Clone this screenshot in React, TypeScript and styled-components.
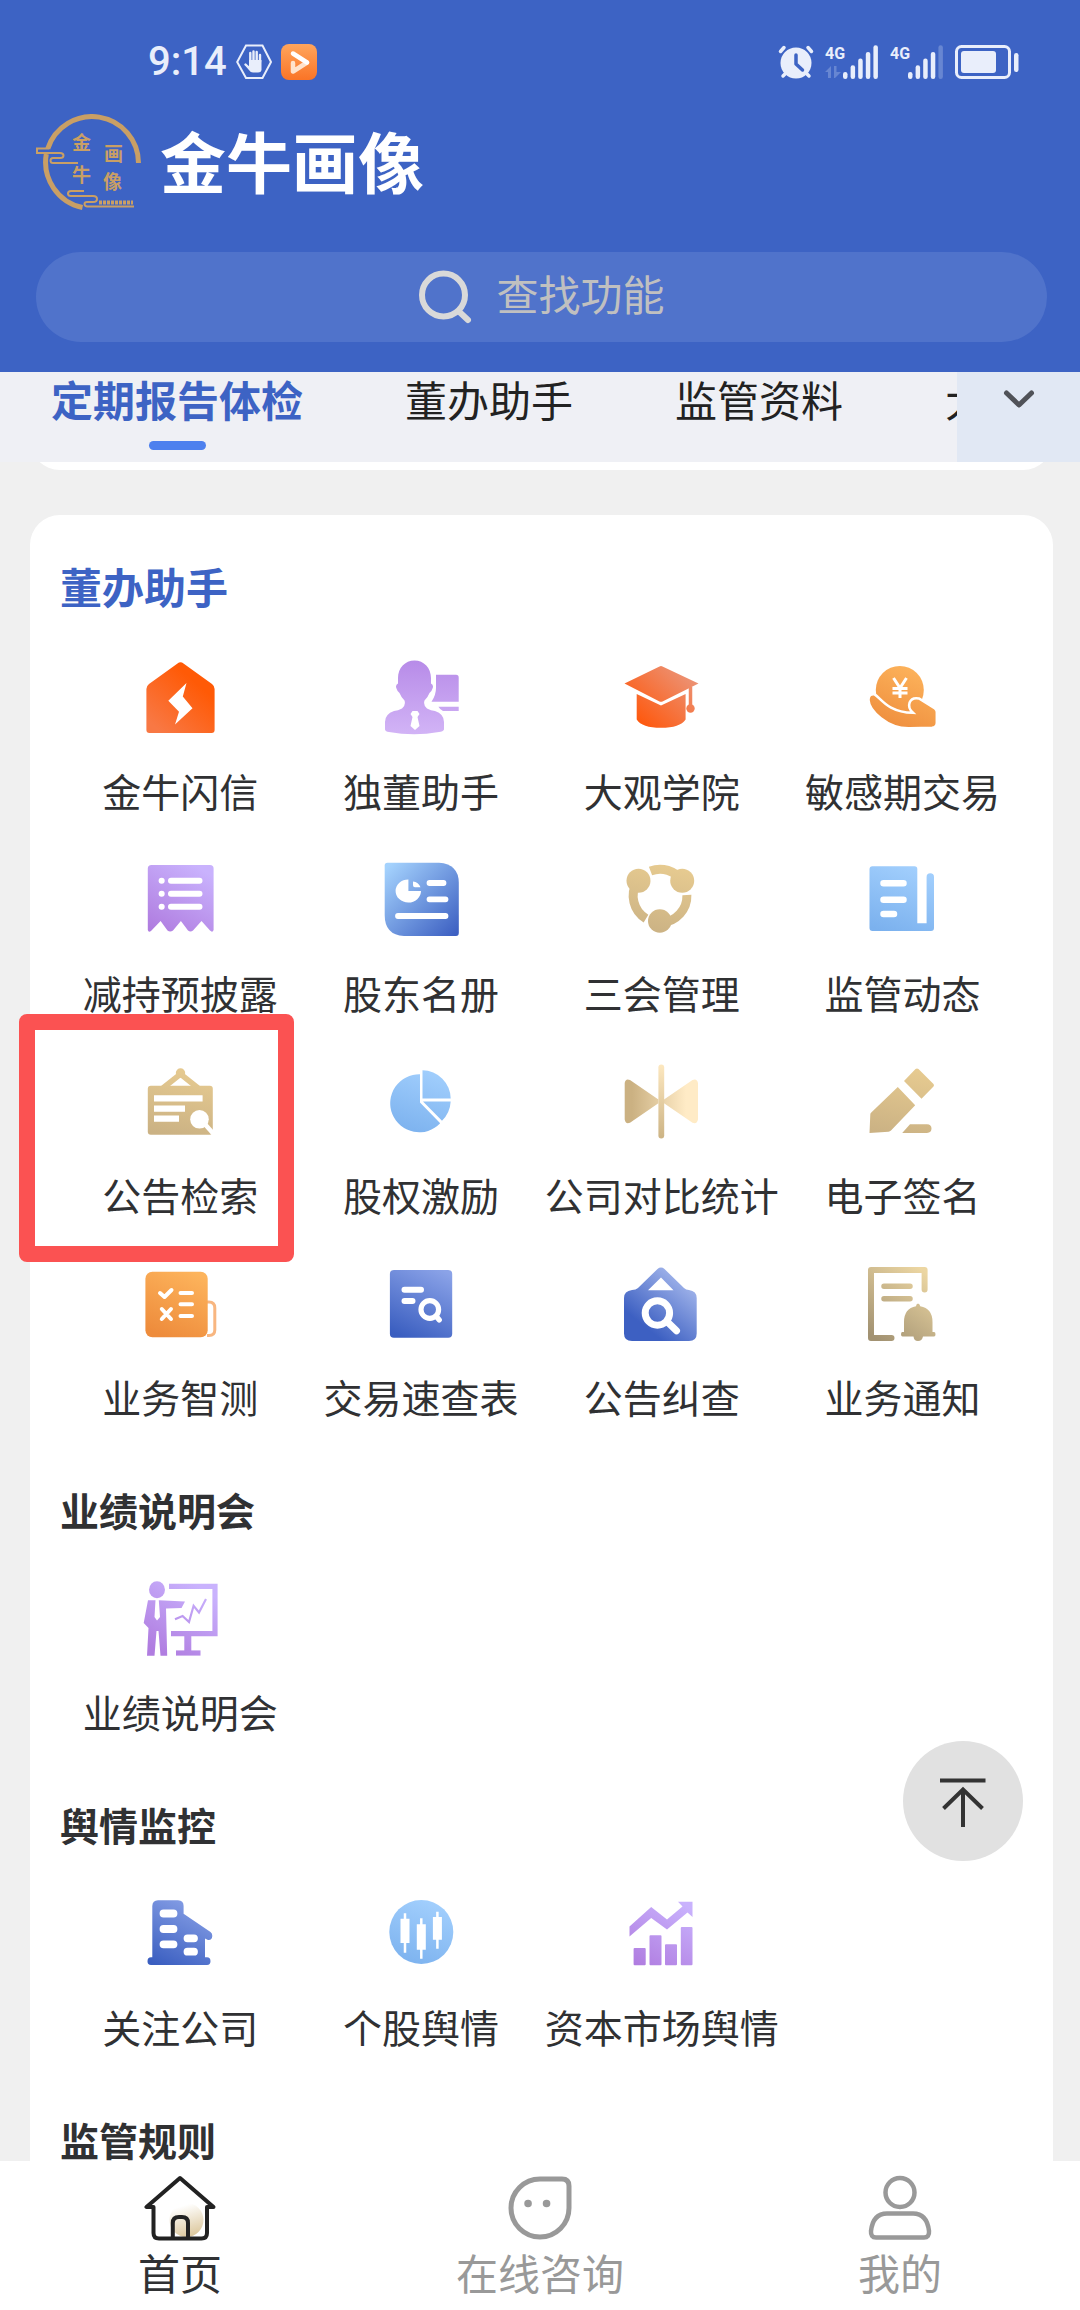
import React from 'react';
import styled, { createGlobalStyle, css } from 'styled-components';

const colors = {
  brand: '#3d63c4',
  page: '#f0f0f0',
  text: '#303133',
  muted: '#999999',
  status: '#e9eefb',
  gold: '#c99f65',
};

const GlobalStyle = createGlobalStyle`
  *, *::before, *::after { box-sizing: border-box; }
  body {
    margin: 0;
    background: ${colors.page};
    color: ${colors.text};
    font-family: "Noto Sans CJK SC", "Noto Sans", sans-serif;
  }
  button, input { font: inherit; color: inherit; border: 0; padding: 0; background: none; }
  a { color: inherit; text-decoration: none; }
  h1, h2 { margin: 0; }
  svg { display: block; flex: none; }
`;

const Screen = styled.div`
  position: relative;
  display: flex;
  flex-direction: column;
  height: 100vh;
  overflow: hidden;
`;

/* ---------- header ---------- */

const Header = styled.header`
  flex: none;
  padding: 36px 33px 30px 36px;
  background: ${colors.brand};
`;

const StatusBar = styled.div`
  display: flex;
  align-items: center;
  justify-content: space-between;
  height: 52px;
  padding: 0 28px 0 112px;
  color: ${colors.status};
`;

const StatusGroup = styled.div<{ $gap: number }>`
  display: flex;
  align-items: center;
  gap: ${(p) => p.$gap}px;
`;

const Clock = styled.span`
  font: 500 40px/52px Roboto, sans-serif;
`;

const Brand = styled.div`
  display: flex;
  align-items: flex-start;
  gap: 18px;
  height: 96px;
  margin-top: 26px;
`;

const BrandName = styled.h1`
  color: #fff;
  font-size: 66px;
  font-weight: 700;
  line-height: 90px;
  white-space: nowrap;
`;

const SearchBox = styled.label`
  display: flex;
  align-items: center;
  justify-content: center;
  gap: 25px;
  height: 90px;
  margin-top: 42px;
  border-radius: 45px;
  background: #5073cb;
`;

const SearchInput = styled.input`
  width: 168px;
  height: 62px;
  margin-bottom: 8px;
  font-size: 42px;
  line-height: 62px;
  outline: none;
  &::placeholder { color: #c0c0c0; opacity: 1; }
`;

/* ---------- tabs ---------- */

const TabBar = styled.nav`
  display: flex;
  flex: none;
  height: 90px;
  background: #eff0f5;
`;

const TabList = styled.div`
  display: flex;
  flex: 1;
  min-width: 0;
  overflow-x: clip;
`;

const Tab = styled.button<{ $active?: boolean }>`
  display: flex;
  flex: none;
  flex-direction: column;
  align-items: center;
  justify-content: space-between;
  padding: 0 51px 12px;
  font-size: 42px;
  line-height: 54px;
  white-space: nowrap;
  color: #222;
  ${(p) => p.$active && css`
    color: ${colors.brand};
    font-weight: 700;
    &::after {
      content: '';
      width: 57px;
      height: 9px;
      border-radius: 5px;
      background: #4d80ee;
    }
  `}
`;

const MoreTabs = styled.button`
  display: flex;
  flex: none;
  justify-content: center;
  width: 123px;
  padding-top: 17px;
  background: #e1e8f4;
`;

/* ---------- content ---------- */

const Main = styled.main`
  flex: 1;
  min-height: 0;
  padding: 0 27px 0 30px;
  overflow-y: auto;
  scrollbar-width: none;
`;

const Card = styled.div`
  padding: 40px 30px;
  border-radius: 30px;
  background: #fff;
`;

const PassedCard = styled(Card)`
  margin: -72px 0 45px;
`;

const Section = styled.section`
  & + & { margin-top: 55px; }
`;

const SectionTitle = styled.h2<{ $lead?: boolean }>`
  margin-bottom: 43px;
  font-size: ${(p) => (p.$lead ? 42 : 39)}px;
  line-height: ${(p) => (p.$lead ? 62 : 58)}px;
  font-weight: 700;
  color: ${(p) => (p.$lead ? colors.brand : colors.text)};
`;

const Grid = styled.div`
  display: grid;
  grid-template-columns: repeat(4, minmax(0, 1fr));
  row-gap: 43px;
`;

const Entry = styled.a<{ $marked?: boolean }>`
  position: relative;
  display: flex;
  flex-direction: column;
  align-items: center;
  gap: 26px;
  font-size: 39px;
  line-height: 58px;
  white-space: nowrap;
  ${(p) => p.$marked && css`
    &::after {
      content: '';
      position: absolute;
      inset: -50px 7px -39px -41px;
      border: 16px solid #fb5252;
      border-radius: 8px;
      pointer-events: none;
    }
  `}
`;

const TopButton = styled.button`
  position: absolute;
  right: 57px;
  bottom: 449px;
  display: flex;
  align-items: center;
  justify-content: center;
  width: 120px;
  height: 120px;
  border-radius: 50%;
  background: #e1e1e1;
`;

/* ---------- bottom navigation ---------- */

const BottomNav = styled.nav`
  display: grid;
  flex: none;
  grid-template-columns: repeat(3, 1fr);
  padding: 14px 0 8px;
  background: #fff;
`;

const NavItem = styled.a<{ $active?: boolean }>`
  display: flex;
  flex-direction: column;
  align-items: center;
  gap: 1px;
  font-size: 42px;
  line-height: 60px;
  color: ${(p) => (p.$active ? colors.text : colors.muted)};
`;

/* ---------- icons ---------- */

type Ramp = [from: string, to: string, x1: number, y1: number, x2: number, y2: number];

const ramps: Record<string, Ramp> = {
  flame: ['#f87844', '#ff5a06', 10, 65, 50, 20],
  cap: ['#ff5508', '#ec9274', 12, 65, 62, 12],
  lilac: ['#b78be8', '#d2b4f6', 0, 0, 0, 75],
  violet: ['#b07de0', '#c9b2fd', 15, 70, 55, 5],
  amber: ['#ee8c3c', '#fdb45c', 20, 70, 50, 5],
  azureNavy: ['#a4d2fd', '#3d60c2', 4, 4, 72, 72],
  sand: ['#e6ca90', '#cbb284', 45, 5, 30, 72],
  azure: ['#a2cffd', '#7bb1ee', 50, 5, 25, 72],
  navy: ['#3a5ec0', '#8ba3e8', 20, 72, 55, 2],
  navyPale: ['#3d60c2', '#a9bbee', 20, 60, 62, 8],
  cream: ['#cbb182', '#ffebc6', 8, 37, 62, 37],
  creamBar: ['#fde8c0', '#ccb384', 0, 0, 0, 75],
  khaki: ['#a29272', '#ecd6a2', 10, 72, 60, 6],
};

const Glyph = ({ ramp, children }: { ramp: string; children: (paint: string) => React.ReactNode }) => {
  const [from, to, x1, y1, x2, y2] = ramps[ramp];
  const id = React.useId();
  return (
    <svg width="75" height="75" viewBox="0 0 75 75" fill="none" aria-hidden="true">
      <linearGradient id={id} gradientUnits="userSpaceOnUse" x1={x1} y1={y1} x2={x2} y2={y2}>
        <stop stopColor={from} />
        <stop offset="1" stopColor={to} />
      </linearGradient>
      {children(`url(#${id})`)}
    </svg>
  );
};

const FlashIcon = () => (
  <Glyph ramp="flame">{(p) => <>
    <path fill={p} d="M34.5 3.6Q37.5 1 40.5 3.6L69 24Q71.6 26 71.6 29V70Q71.6 73 68.6 73H6.4Q3.4 73 3.4 70V29Q3.4 26 6 24Z" />
    <path fill="#fff" d="M43.5 23L39.8 36.5L49.5 48.2L32 64.5L36 51.7L25.3 40.8Z" />
  </>}</Glyph>
);

const DirectorIcon = () => (
  <Glyph ramp="lilac">{(p) => <>
    <path fill={p} d="M30.500 0.500C40 0.500 47 8 47 18V23.500Q50 25 48.500 28.500Q47.500 32 45.500 33Q44 37 40.500 40.500Q39 45 43 48.500Q47 50.500 51 51Q60 54 60 62V69.500Q59 71.500 55 72Q30 76.500 5 72Q1.500 71.500 1 69.500V62Q1 54 10 51Q14 50.500 18 48.500Q22 45 20.500 40.500Q17 37 15.500 33Q13.500 32 12.500 28.500Q11 25 14 23.500V18C14 8 21 0.500 30.500 0.500Z" />
    <path fill={p} d="M52 14.800H72Q74.700 14.800 74.700 17.500V41.700H47.500Q52 35 52 28ZM54.400 46.700H74.700V51H59Q56 49.500 54.400 46.700Z" />
    <path fill="#fff" d="M28.500 51H33.500L35.500 54L33.500 57L35.500 66L31 70L26.500 66L28.500 57L26.500 54Z" />
  </>}</Glyph>
);

const AcademyIcon = () => (
  <Glyph ramp="cap">{(p) => <>
    <path fill={p} d="M0.500 23.500L35.500 6.500Q37 5.700 38.500 6.500L74.500 23.500L38.500 41.500Q37 42.200 35.500 41.500Z" />
    <path fill={p} d="M12.700 34L37 45.500L61.600 34V59.500Q56 67.800 37 67.800T12.700 59.500Z" />
    <path stroke={p} strokeWidth="3.500" d="M66.500 27V46" />
    <circle fill={p} cx="66.500" cy="48.500" r="4.200" />
  </>}</Glyph>
);

const TradeIcon = () => (
  <Glyph ramp="amber">{(p) => <>
    <circle fill={p} cx="34.800" cy="30" r="24" />
    <path fill={p} stroke="#fff" strokeWidth="2.500" d="M3.500 40Q3.500 33.500 9.500 34.300C16 38 22 52 48 52.800C41 46.500 44 36.500 54 38.500L70 48.500Q71.800 50 71.800 52V63Q71.500 67.500 67 67.800L45 68.200C22 69 4 50 3.500 40Z" />
    <path stroke="#fff" strokeWidth="3" d="M28.500 18L35 28L41.500 18M35 27V38M27.500 28.500H42.500M27.500 33H42.500" />
  </>}</Glyph>
);

const ReceiptIcon = () => (
  <Glyph ramp="violet">{(p) => <>
    <path fill={p} d="M8.500 3H67Q70.600 3 70.600 6.500V68Q69.500 71 67 68.500L58.500 59L50 68.500Q47.500 70.500 45 68.500L37.900 59L30 68.500Q27.200 70.500 24.500 68.500L17.600 59L8 69Q5.500 71 4.800 68V6.500Q4.800 3 8.500 3Z" />
    <path stroke="#fff" strokeWidth="6" strokeLinecap="round" d="M28 18.700H56.500M28 31.700H56.500M28 44.700H56.500M18.600 18.700H18.700M18.600 31.700H18.700M18.600 44.700H18.700" />
  </>}</Glyph>
);

const RosterIcon = () => (
  <Glyph ramp="azureNavy">{(p) => <>
    <path fill={p} d="M3.500 0.700H55Q74.800 2 74.800 21V71Q74.800 74 72 74H20Q0.700 73 0.700 53V3.500Q0.700 0.700 3.500 0.700Z" />
    <path fill="#fff" d="M24.400 17.500V29H37A12.700 11.500 0 1 1 24.400 17.500ZM29 19.500Q34.500 20 36.500 25.200H31Q29 25.200 29 23.200Z" />
    <path stroke="#fff" strokeWidth="5.800" strokeLinecap="round" d="M45.500 21H59.500M45.500 37.300H61.500M14 54H61.500" />
  </>}</Glyph>
);

const MeetingIcon = () => (
  <Glyph ramp="sand">{(p) => <>
    <path stroke={p} strokeWidth="9" d="M26.500 9A26.700 26.700 0 0 1 58 18.700M62.900 33A26.700 26.700 0 0 1 38 60.500M22 56.600A26.700 26.700 0 0 1 13 20" />
    <circle fill={p} cx="14.500" cy="18.700" r="12" />
    <circle fill={p} cx="58.200" cy="18.700" r="12" />
    <circle fill={p} cx="35.800" cy="59" r="11.800" />
  </>}</Glyph>
);

const NewsIcon = () => (
  <Glyph ramp="azure">{(p) => <>
    <path fill={p} d="M7.500 4.300H49.500Q52.300 4.300 52.300 7V61.300H61.600V15Q61.600 11.300 65.300 11.300T69 15V66Q69 69 66 69H7.500Q4.500 69 4.500 66V7.200Q4.500 4.300 7.500 4.300Z" />
    <path stroke="#fff" strokeWidth="6.500" strokeLinecap="round" d="M18.500 21.300H38.500M18.500 37.700H38.500M18.500 52H29" />
  </>}</Glyph>
);

const NoticeSearchIcon = () => (
  <Glyph ramp="sand">{(p) => <>
    <path stroke={p} strokeWidth="5.500" d="M20 24L37.500 10L55 24" />
    <circle fill={p} cx="37.500" cy="9" r="4.700" />
    <rect fill={p} x="4.800" y="21.700" width="65" height="49" rx="3" />
    <path fill="#fff" d="M11 31.300H59.600V37.500H11ZM11 41.500H42V47.700H11ZM11 51.500H36V57.700H11Z" />
    <circle fill="#fff" cx="56.500" cy="55.300" r="9.300" />
    <path stroke="#fff" strokeWidth="4.500" d="M60 58L72 71.500" />
  </>}</Glyph>
);

const PieIcon = () => (
  <Glyph ramp="azure">{(p) => (
    <path fill={p} d="M36 10.300V38.500L56.200 59.300A29 29 0 1 1 36 10.300ZM38.500 6.300A28.500 28.500 0 0 1 66.700 34.500H38.500ZM39 37.500H66.700Q66 49 58 56.700Z" />
  )}</Glyph>
);

const CompareIcon = () => (
  <Glyph ramp="cream">{(p) => <>
    <path fill={p} d="M0.700 19Q1.500 14 6 16L34.400 35.500V39.200L6 58.700Q1.500 60.500 0.700 55.500ZM74 19Q73 14 68.500 16L40 35.500V39.200L68.500 58.700Q73 60.500 74 55.500Z" />
    <linearGradient id="compare-bar" gradientUnits="userSpaceOnUse" x1="0" y1="0" x2="0" y2="75">
      <stop stopColor={ramps.creamBar[0]} />
      <stop offset="1" stopColor={ramps.creamBar[1]} />
    </linearGradient>
    <rect fill="url(#compare-bar)" x="34.400" y="0.500" width="5.800" height="74" rx="2.900" />
  </>}</Glyph>
);

const SignIcon = () => (
  <Glyph ramp="sand">{(p) => (
    <path fill={p} d="M50.500 5Q52 3.800 53.500 5L68.500 20Q69.500 21.300 68.500 22.600L56.500 34.700L39 17ZM32.800 23L50.200 41.200L26 66.500Q25 67.600 23.500 67.700L4.500 69L5.300 50.500Q5.300 49.500 6 48.700ZM45 60.300H62Q66.500 60.500 66.500 64.600T62 69H37.200Z" />
  )}</Glyph>
);

const QuizIcon = () => (
  <Glyph ramp="amber">{(p) => <>
    <path stroke="#f8b680" strokeWidth="3" d="M64 36H66Q71.800 36 71.800 42V64Q71.800 69.500 66 69.500H64" />
    <rect fill={p} x="2.400" y="5.700" width="62.300" height="65.600" rx="7" />
    <path stroke="#fff" strokeWidth="4" strokeLinecap="round" strokeLinejoin="round" d="M17 27L21.500 31L28.500 24M18.800 43L28 53M28 43L18.800 53M37.500 27H49M37.500 38.300H49M37.500 50H49" />
  </>}</Glyph>
);

const TableSearchIcon = () => (
  <Glyph ramp="navy">{(p) => <>
    <rect fill={p} x="5.900" y="4" width="62.300" height="67.700" rx="4" />
    <path stroke="#fff" strokeWidth="6" strokeLinecap="round" d="M20.500 23.700H37M20.500 35H28.500" />
    <circle stroke="#fff" strokeWidth="5.200" cx="45.800" cy="43.500" r="8.800" />
    <path stroke="#fff" strokeWidth="5.200" strokeLinecap="round" d="M52 50L55.300 54" />
  </>}</Glyph>
);

const ReviewIcon = () => (
  <Glyph ramp="navyPale">{(p) => <>
    <path fill={p} fillRule="evenodd" d="M33.500 3Q37 0.200 40.500 3L60 22Q62 24 65 24Q72.700 25 72.700 32V67.500Q72.700 75 65 75H8Q0 75 0 67.500V32Q0 25 8 24Q12 24 14 22ZM37 11.500L24 24.300H49.500Z" />
    <circle stroke="#fff" strokeWidth="7" cx="33.400" cy="47" r="12.200" />
    <path stroke="#fff" strokeWidth="7" strokeLinecap="round" d="M43.500 56L52.500 64.800" />
  </>}</Glyph>
);

const NotifyIcon = () => (
  <Glyph ramp="khaki">{(p) => <>
    <path stroke={p} strokeWidth="6" strokeLinecap="round" strokeLinejoin="round" d="M59.600 23.500V4H6V72H26.500" />
    <path stroke={p} strokeWidth="5.500" strokeLinecap="round" d="M19 20.300H45M19 32.700H45" />
    <path fill={p} d="M53 37.500Q55 38 55.200 40.300Q67.500 42.500 67.500 56V66H69Q70.500 66 70.500 68.200T69 70.500H58Q57 75 53 75T48.500 70.500H37.500Q36 70.500 36 68.200T37.500 66H39V56Q39 42.500 51 40.300Q51 38 53 37.500Z" />
  </>}</Glyph>
);

const BriefingIcon = () => (
  <Glyph ramp="violet">{(p) => <>
    <ellipse fill={p} cx="14" cy="8.700" rx="8" ry="8.500" />
    <path fill={p} d="M5 19.300H12.500L11.500 36L14 39.500L17 36L15.800 19.300L42 20.500L38.500 27L23 27.500L24.200 74.700H17.500L15.500 50H13.500L11.500 74.700H4L5.500 47L0.700 42Z" />
    <path stroke={p} strokeWidth="5.200" d="M26 5.300H72V52.700H28" />
    <path stroke={p} strokeWidth="7" d="M44.800 53V71" />
    <path stroke={p} strokeWidth="5.200" d="M33 72H57.500" />
    <path stroke={p} strokeWidth="2.200" d="M32 38.300L39.600 35L46 41L50.600 24.800L56 31.500L63 18" />
  </>}</Glyph>
);

const CompanyIcon = () => (
  <Glyph ramp="navy">{(p) => <>
    <path fill={p} d="M15 4.300H35Q40.600 4.500 40.600 10V17.700L67.500 36Q69.500 37.500 69.300 40Q69 44.500 65 44L62 42.500V61.300H64Q67.500 61.500 67.500 65.200T64 69H8Q4.500 69 4.500 65.200T8 61.300H9.300V10Q9.500 4.500 15 4.300Z" />
    <path stroke="#fff" strokeWidth="7.800" strokeLinecap="round" d="M20.500 17.500H30.500M20.500 33H30.500M20.500 48.300H30.500M44.500 42.300H51M44.500 55.700H51" />
  </>}</Glyph>
);

const CandleIcon = () => (
  <Glyph ramp="azure">{(p) => <>
    <circle fill={p} cx="37.300" cy="36" r="32" />
    <path stroke="#fff" strokeWidth="9" d="M21 22.700V47M37.300 28.300V53.700M53.400 21V43.700" />
    <path stroke="#fff" strokeWidth="2.500" d="M21 17.300V56.700M37.300 22.300V62.700M53.400 15.700V52.700" />
  </>}</Glyph>
);

const MarketIcon = () => (
  <Glyph ramp="violet">{(p) => <>
    <path fill={p} d="M5.500 30.500L27.200 11L43 23.500L58.500 10.500L54 5.800H68.500V21L63.500 16.500L43 33.500L27.200 22L5.500 40.500Z" />
    <path fill={p} stroke={p} strokeWidth="2" strokeLinejoin="round" d="M10.600 53H20.700V68.300H10.600ZM26.500 40.300H36.500V68.300H26.500ZM42 49.200H52V68.300H42ZM57.800 32H67.500V68.300H57.800Z" />
  </>}</Glyph>
);

const LogoMark = () => (
  <svg width="106" height="96" viewBox="0 0 106 96" fill="none" stroke={colors.gold} aria-hidden="true">
    <path strokeWidth="5" d="M102.500 49A46.500 46.500 0 0 0 11.800 34.600M10.300 40A46.500 46.500 0 0 0 46.500 93.500" />
    <path strokeWidth="2" d="M13 34.500H1V39H24Q27.500 39 27.500 41.500T24 44H17Q14.500 44 14.500 46.500T17 49H42" />
    <path strokeWidth="2" d="M48 77H35Q32 77 32 79.500T35 82H57Q61 82 61 85T57 88H51Q48.500 88 48.500 90T51 92.500H98" />
    <path strokeWidth="4" strokeDasharray="3 1" d="M63 88.500H97" />
    <g fill={colors.gold} stroke="none" fontSize="19" fontWeight="700">
      <text x="36" y="36">金</text>
      <text x="36" y="68">牛</text>
      <text x="68" y="47">画</text>
      <text x="67" y="75">像</text>
    </g>
  </svg>
);

const HandIcon = () => (
  <svg width="36" height="36" viewBox="0 0 36 36" fill="none" stroke="currentColor" aria-hidden="true">
    <path strokeWidth="2" d="M10 1.500H26.500L35 18L26.500 34H10L1.200 18Z" />
    <path strokeWidth="2.400" strokeLinecap="round" d="M14.300 18V9M17.500 17V7.500M20.700 17V8M24 18V11M9.500 20.500L14 25" />
    <path fill="currentColor" stroke="none" d="M13 16H25.500V26Q25 28.500 22 28.500H17Q14.500 28.500 13 26L9 21L13 22Z" />
  </svg>
);

const PlayerIcon = () => (
  <svg width="36" height="36" viewBox="0 0 36 36" fill="none" aria-hidden="true">
    <linearGradient id="player" x1="0" y1="0" x2="0" y2="1">
      <stop stopColor="#ffa55c" />
      <stop offset="1" stopColor="#fa7426" />
    </linearGradient>
    <rect width="36" height="36" rx="8" fill="url(#player)" />
    <path stroke="#ffe3cc" strokeWidth="4.500" strokeLinecap="round" strokeLinejoin="round" d="M26 18.500L12 27.500V19" />
    <path stroke="#fff" strokeWidth="4.500" strokeLinecap="round" strokeLinejoin="round" d="M12 9.500L26 18.500" />
  </svg>
);

const AlarmIcon = () => (
  <svg width="36" height="34" viewBox="0 0 36 34" fill="none" stroke="currentColor" strokeLinecap="round" aria-hidden="true">
    <circle cx="18" cy="18" r="15.500" fill="currentColor" stroke="none" />
    <path strokeWidth="3.500" d="M2.500 6.500L6 2.500M33.500 6.500L30 2.500M5 31L8 28M31 31L28 28" />
    <path stroke={colors.brand} strokeWidth="3.500" strokeLinejoin="round" d="M18 10V19L24.500 25" />
  </svg>
);

const SignalIcon = ({ bars, transfer }: { bars: number; transfer?: boolean }) => (
  <svg width="54" height="34" viewBox="0 0 54 34" fill="currentColor" aria-hidden="true">
    <text x="0" y="14" fontFamily="Roboto, sans-serif" fontSize="16" fontWeight="700">4G</text>
    {transfer && <path opacity="0.250" d="M0 27L6 21V33H3V27ZM9 21H11.500V27H16L10 33H9Z" />}
    {[0, 1, 2, 3, 4].map((i) => (
      <rect key={i} x={18 + i * 7.600} y={27 - i * 6.700} width="4.500" height={7 + i * 6.700} rx="2.200" opacity={i < bars ? 1 : 0.250} />
    ))}
  </svg>
);

const BatteryIcon = () => (
  <svg width="64" height="34" viewBox="0 0 64 34" fill="currentColor" aria-hidden="true">
    <rect x="1.500" y="1.500" width="53" height="31" rx="5" fill="none" stroke="currentColor" strokeWidth="3" />
    <rect x="6" y="6" width="35" height="22" rx="3" />
    <rect x="59" y="8" width="4.500" height="19" rx="2.200" />
  </svg>
);

const SearchIcon = () => (
  <svg width="53" height="54" viewBox="0 0 53 54" fill="none" stroke="#d9d9d9" strokeWidth="6" strokeLinecap="round" aria-hidden="true">
    <circle cx="24.500" cy="25" r="21.500" />
    <path d="M40.500 42L49 50" />
  </svg>
);

const ChevronIcon = () => (
  <svg width="32" height="20" viewBox="0 0 32 20" fill="none" stroke="#505258" strokeWidth="5" strokeLinecap="round" strokeLinejoin="round" aria-hidden="true">
    <path d="M3.500 4L16 16L28.500 4" />
  </svg>
);

const ToTopIcon = () => (
  <svg width="48" height="52" viewBox="0 0 48 52" fill="none" stroke="#333" strokeWidth="4" aria-hidden="true">
    <path d="M1 5.500H46.500M24 52V14M4.500 33.500L24 14.500L43.500 33.500" />
  </svg>
);

const HomeIcon = () => (
  <svg width="72" height="66" viewBox="0 0 72 66" fill="none" stroke="#222" strokeWidth="4" strokeLinejoin="round" aria-hidden="true">
    <linearGradient id="home-glow" x1="0.300" y1="0" x2="0.600" y2="1">
      <stop offset="0.100" stopColor="#fff" />
      <stop offset="1" stopColor="#dcc79c" />
    </linearGradient>
    <circle cx="42.500" cy="45" r="17" fill="url(#home-glow)" stroke="none" />
    <path d="M36 3L2.500 32H9.500V58Q9.500 63.500 15 63.500H57.500Q63 63.500 63 58V32H69.500ZM28.800 63V48Q28.800 42 35 42H38Q44 42 44 48V63" />
  </svg>
);

const ChatIcon = () => (
  <svg width="66" height="66" viewBox="0 0 66 66" fill="none" stroke={colors.muted} strokeWidth="5" aria-hidden="true">
    <path d="M33 4H55Q62 4 62 11V33A29 29 0 1 1 33 4Z" />
    <path strokeWidth="7.500" strokeLinecap="round" d="M21 28.500H21.100M39.500 28.500H39.600" />
  </svg>
);

const UserIcon = () => (
  <svg width="66" height="66" viewBox="0 0 66 66" fill="none" stroke={colors.muted} strokeWidth="4.500" aria-hidden="true">
    <circle cx="33" cy="17.500" r="14.500" />
    <path d="M20 38.500H46Q60 38.500 62 56Q62.500 62.500 57 62.500H9Q3.500 62.500 4 56Q6 38.500 20 38.500Z" />
  </svg>
);

/* ---------- data ---------- */

type Item = { label: string; icon: React.FC; marked?: boolean };

const sections: { title: string; items: Item[] }[] = [
  {
    title: '董办助手',
    items: [
      { label: '金牛闪信', icon: FlashIcon },
      { label: '独董助手', icon: DirectorIcon },
      { label: '大观学院', icon: AcademyIcon },
      { label: '敏感期交易', icon: TradeIcon },
      { label: '减持预披露', icon: ReceiptIcon },
      { label: '股东名册', icon: RosterIcon },
      { label: '三会管理', icon: MeetingIcon },
      { label: '监管动态', icon: NewsIcon },
      { label: '公告检索', icon: NoticeSearchIcon, marked: true },
      { label: '股权激励', icon: PieIcon },
      { label: '公司对比统计', icon: CompareIcon },
      { label: '电子签名', icon: SignIcon },
      { label: '业务智测', icon: QuizIcon },
      { label: '交易速查表', icon: TableSearchIcon },
      { label: '公告纠查', icon: ReviewIcon },
      { label: '业务通知', icon: NotifyIcon },
    ],
  },
  { title: '业绩说明会', items: [{ label: '业绩说明会', icon: BriefingIcon }] },
  {
    title: '舆情监控',
    items: [
      { label: '关注公司', icon: CompanyIcon },
      { label: '个股舆情', icon: CandleIcon },
      { label: '资本市场舆情', icon: MarketIcon },
    ],
  },
  { title: '监管规则', items: [] },
];

const tabs = ['定期报告体检', '董办助手', '监管资料', '大观学院'];

export default function App() {
  return (
    <Screen>
      <GlobalStyle />
      <Header>
        <StatusBar>
          <StatusGroup $gap={9}>
            <Clock>9:14</Clock>
            <HandIcon />
            <PlayerIcon />
          </StatusGroup>
          <StatusGroup $gap={11}>
            <AlarmIcon />
            <SignalIcon bars={5} transfer />
            <SignalIcon bars={4} />
            <BatteryIcon />
          </StatusGroup>
        </StatusBar>
        <Brand>
          <LogoMark />
          <BrandName>金牛画像</BrandName>
        </Brand>
        <SearchBox>
          <SearchIcon />
          <SearchInput type="text" placeholder="查找功能" aria-label="查找功能" />
        </SearchBox>
      </Header>

      <TabBar>
        <TabList>
          {tabs.map((tab, i) => (
            <Tab key={tab} type="button" $active={i === 0}>{tab}</Tab>
          ))}
        </TabList>
        <MoreTabs type="button" aria-label="展开"><ChevronIcon /></MoreTabs>
      </TabBar>

      <Main>
        <PassedCard />
        <Card>
          {sections.map((section, i) => (
            <Section key={section.title}>
              <SectionTitle $lead={i === 0}>{section.title}</SectionTitle>
              <Grid>
                {section.items.map(({ label, icon: Icon, marked }) => (
                  <Entry key={label} href="#" $marked={marked}>
                    <Icon />
                    {label}
                  </Entry>
                ))}
              </Grid>
            </Section>
          ))}
        </Card>
      </Main>

      <TopButton type="button" aria-label="回到顶部"><ToTopIcon /></TopButton>

      <BottomNav>
        <NavItem href="#" $active><HomeIcon />首页</NavItem>
        <NavItem href="#"><ChatIcon />在线咨询</NavItem>
        <NavItem href="#"><UserIcon />我的</NavItem>
      </BottomNav>
    </Screen>
  );
}
